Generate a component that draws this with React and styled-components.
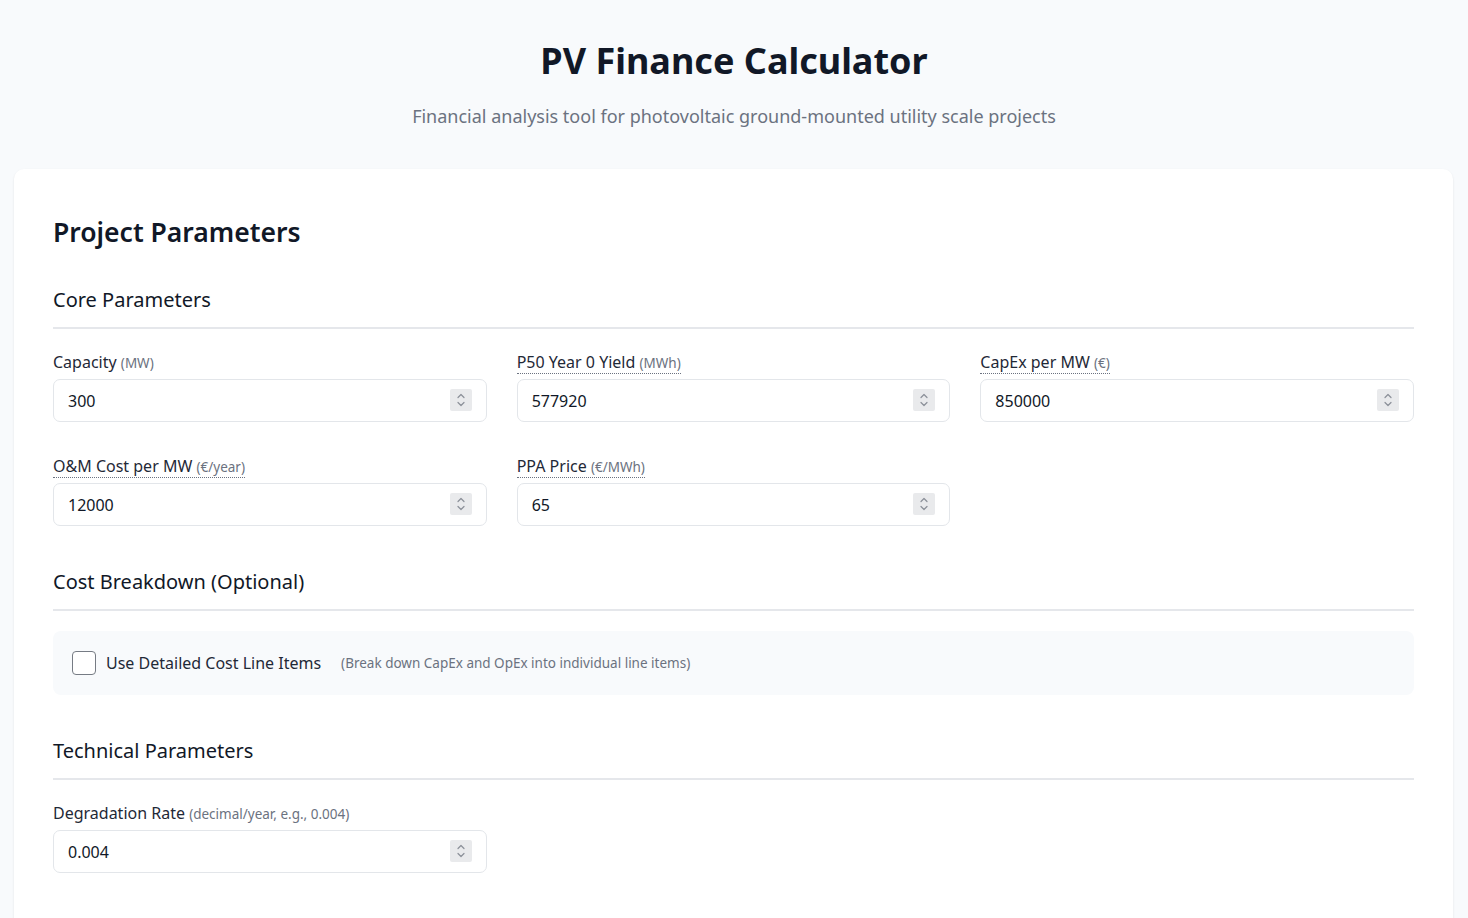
import React, {useState} from 'react';
import styled, {createGlobalStyle} from 'styled-components';

const GlobalStyle = createGlobalStyle`
    * { box-sizing: border-box; }
    body {
        margin: 0;
        background: #f8fafc;
        font-family: "Noto Sans", Lato, "Liberation Sans", sans-serif;
        color: #1f2937;
    }
`;

const coreFields = [
    {label: 'Capacity', unit: '(MW)', value: '300'},
    {label: 'P50 Year 0 Yield', unit: '(MWh)', value: '577920', help: true},
    {label: 'CapEx per MW', unit: '(€)', value: '850000', help: true},
    {label: 'O&M Cost per MW', unit: '(€/year)', value: '12000', help: true},
    {label: 'PPA Price', unit: '(€/MWh)', value: '65', help: true},
];

const technicalFields = [
    {label: 'Degradation Rate', unit: '(decimal/year, e.g., 0.004)', value: '0.004'},
];

const Spinner = () => (
    <SpinBox>
        <svg width="10" height="16" viewBox="0 0 10 16" fill="none" stroke="#8b9099" strokeWidth="1.2"
             strokeLinecap="round" strokeLinejoin="round">
            <path d="M2 5.5 L5 2.5 L8 5.5"/>
            <path d="M2 10.5 L5 13.5 L8 10.5"/>
        </svg>
    </SpinBox>
);

const Field = ({label, unit, value, help}) => {
    const [val, setVal] = useState(value);
    return (
        <FieldWrap>
            <Label>
                <LabelText help={help ? 1 : 0}>
                    {label} <Unit>{unit}</Unit>
                </LabelText>
            </Label>
            <InputWrap>
                <NumberInput type="number" value={val} onChange={e => setVal(e.target.value)}/>
                <Spinner/>
            </InputWrap>
        </FieldWrap>
    );
};

const App = () => {
    const [detailed, setDetailed] = useState(false);

    return (
        <Page>
            <GlobalStyle/>
            <Header>
                <Title>PV Finance Calculator</Title>
                <Subtitle>Financial analysis tool for photovoltaic ground-mounted utility scale projects</Subtitle>
            </Header>
            <Card>
                <CardTitle>Project Parameters</CardTitle>

                <SectionTitle first>Core Parameters</SectionTitle>
                <FieldGrid>
                    {coreFields.map(f => <Field key={f.label} {...f}/>)}
                </FieldGrid>

                <SectionTitle>Cost Breakdown (Optional)</SectionTitle>
                <ToggleBox>
                    <CheckLabel>
                        <Checkbox type="checkbox" checked={detailed} onChange={() => setDetailed(!detailed)}/>
                        Use Detailed Cost Line Items
                    </CheckLabel>
                    <Hint>(Break down CapEx and OpEx into individual line items)</Hint>
                </ToggleBox>

                <SectionTitle>Technical Parameters</SectionTitle>
                <FieldGrid>
                    {technicalFields.map(f => <Field key={f.label} {...f}/>)}
                </FieldGrid>
            </Card>
        </Page>
    );
};

const Page = styled.div`
    min-height: 100vh;
    padding: 0 14px 40px 14px;
`;

const Header = styled.header`
    text-align: center;
    padding: 37px 0 41px;
`;

const Title = styled.h1`
    margin: 0;
    font-size: 36px;
    line-height: 48px;
    font-weight: 700;
    color: #111827;
`;

const Subtitle = styled.p`
    margin: 19px 0 0;
    font-size: 18px;
    line-height: 24px;
    color: #6b7280;
`;

const Card = styled.section`
    background: #ffffff;
    border-radius: 10px;
    box-shadow: 0 1px 3px rgba(15, 23, 42, 0.06), 0 1px 2px rgba(15, 23, 42, 0.04);
    padding: 46px 39px 80px;
    margin-right: 1px;
`;

const CardTitle = styled.h2`
    margin: 0;
    font-size: 26.5px;
    line-height: 34px;
    font-weight: 600;
    color: #111827;
`;

const SectionTitle = styled.h3`
    margin: ${p => (p.first ? '37px' : '42px')} 0 22px;
    padding-bottom: 13px;
    border-bottom: 2px solid #e5e7eb;
    font-size: 20px;
    line-height: 28px;
    font-weight: 400;
    color: #111827;
`;

const FieldGrid = styled.div`
    display: grid;
    grid-template-columns: repeat(3, 1fr);
    gap: 33px 30px;
`;

const FieldWrap = styled.div`
    display: flex;
    flex-direction: column;
    gap: 5px;
`;

const Label = styled.label`
    font-size: 16px;
    line-height: 22px;
    color: #1f2937;
`;

const LabelText = styled.span`
    border-bottom: ${p => (p.help ? '1px dotted #6b7280' : 'none')};
    cursor: ${p => (p.help ? 'help' : 'default')};
`;

const Unit = styled.span`
    font-size: 13.5px;
    color: #6b7280;
`;

const InputWrap = styled.div`
    position: relative;
`;

const NumberInput = styled.input`
    width: 100%;
    height: 43px;
    padding: 0 44px 0 14px;
    border: 1px solid #e3e6ea;
    border-radius: 7px;
    background: #ffffff;
    font-family: inherit;
    font-size: 16px;
    color: #111827;
    outline: none;
    -moz-appearance: textfield;

    &::-webkit-inner-spin-button,
    &::-webkit-outer-spin-button {
        -webkit-appearance: none;
        margin: 0;
    }

    &:focus {
        border-color: #93c5fd;
    }
`;

const SpinBox = styled.span`
    position: absolute;
    right: 15px;
    top: 10px;
    width: 22px;
    height: 22px;
    display: flex;
    align-items: center;
    justify-content: center;
    background: #e9eaec;
    border-radius: 2px;
    pointer-events: none;
`;

const ToggleBox = styled.div`
    display: flex;
    align-items: center;
    gap: 20px;
    height: 64px;
    margin-top: -2px;
    padding: 0 19px;
    background: #f8fafc;
    border-radius: 8px;
`;

const CheckLabel = styled.label`
    display: flex;
    align-items: center;
    gap: 10px;
    font-size: 16px;
    color: #1f2937;
    cursor: pointer;
`;

const Checkbox = styled.input`
    appearance: none;
    margin: 0;
    width: 24px;
    height: 24px;
    border: 1.5px solid #767b84;
    border-radius: 4px;
    background: #ffffff;
    cursor: pointer;

    &:checked {
        background: #2563eb;
        border-color: #2563eb;
    }
`;

const Hint = styled.span`
    font-size: 13.5px;
    color: #6b7280;
`;

export default App;
